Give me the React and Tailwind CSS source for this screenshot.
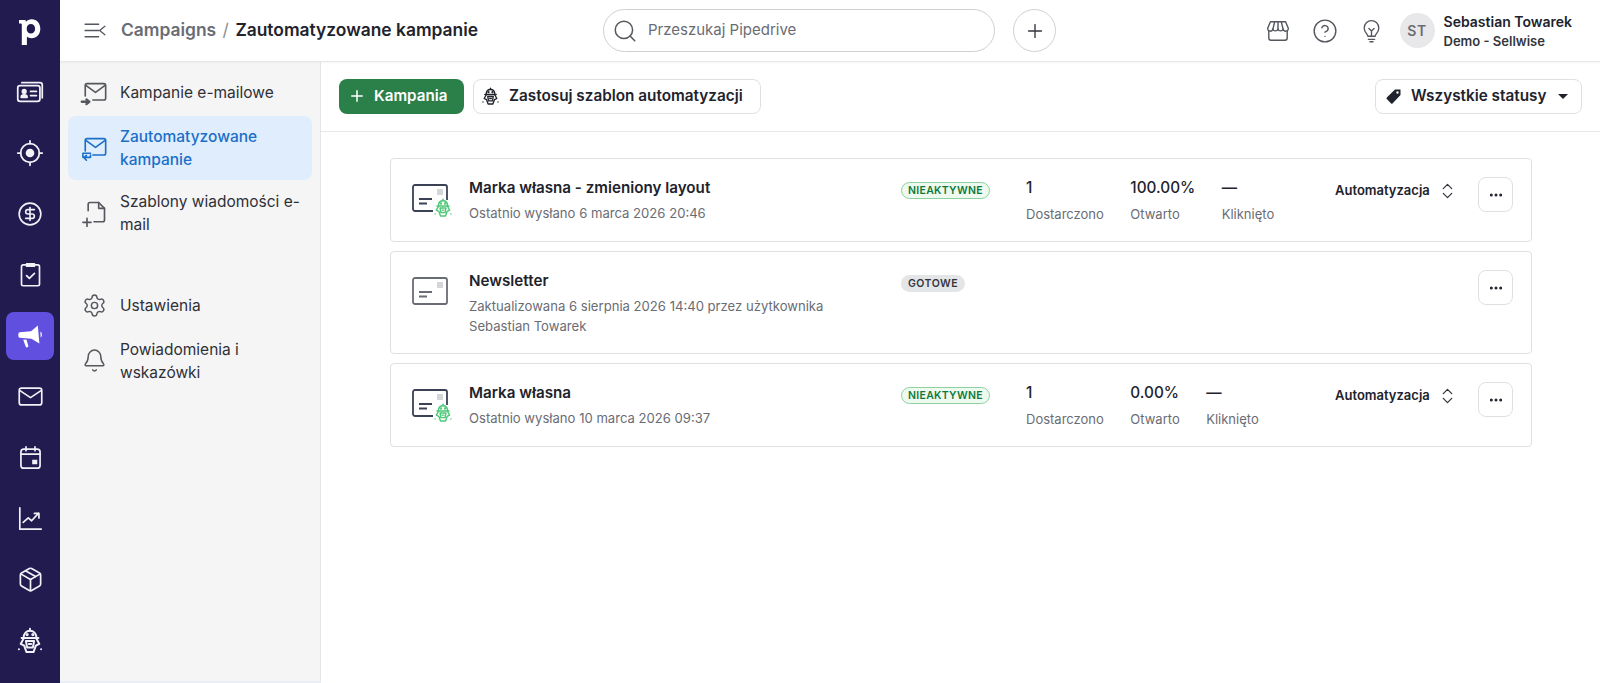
import { Search, Plus, HelpCircle, ChevronUp, ChevronDown, MoreHorizontal, Settings, Bell, Package, CircleDollarSign } from "lucide-react";

const Ico = ({ size = 24, sw = 1.6, children, className = "" }) => (
  <svg width={size} height={size} viewBox="0 0 24 24" fill="none" stroke="currentColor" strokeWidth={sw} strokeLinecap="round" strokeLinejoin="round" className={`shrink-0 ${className}`}>
    {children}
  </svg>
);

const Robot = ({ size = 24, className = "" }) => (
  <svg width={size} height={size} viewBox="0 0 24 24" fill="none" stroke="currentColor" strokeWidth="1.7" strokeLinecap="round" strokeLinejoin="round" className={`shrink-0 ${className}`}>
    <path d="M12 1.500v1.500" />
    <path d="M6.500 9.500C6.500 5.500 9 3.200 12 3.200s5.500 2.300 5.500 6.300" />
    <path d="M4.800 9.500h14.400" />
    <path d="M6.800 9.500l-2.800 5 3 1.500 2 5.500h6l2-5.500 3-1.500-2.800-5" />
    <path d="M8.500 12h7l-1 5.500h-5z" />
    <path d="M11 14.500h2" />
    <circle cx="9.500" cy="6.500" r=".6" fill="currentColor" />
    <circle cx="14.500" cy="6.500" r=".6" fill="currentColor" />
    <path d="M2.500 19v.1M21.500 19v.1" />
  </svg>
);

const Logo = () => (
  <svg width="24" height="28" viewBox="0 0 24 28" fill="#fff">
    <path fillRule="evenodd" d="M1 3h6.500l.4 1.800C9.300 3.300 11.300 2.300 13.800 2.300c5 0 8.500 4 8.500 9.400 0 5.500-3.600 9.500-8.800 9.500-1.900 0-3.500-.6-4.600-1.700V28H3.800V7.500c0-.6-.3-.9-.9-.9H1zM12.800 6.900c-2.400 0-4.100 1.800-4.100 4.800 0 3 1.700 4.900 4.100 4.900 2.500 0 4.300-1.900 4.300-4.900 0-3-1.800-4.800-4.300-4.800z" />
  </svg>
);

const railIcons = [
  <Ico key="a" size={28} sw={1.5}><rect x="1.500" y="6.500" width="19" height="13.500" rx="2" /><path d="M5 4h15.500A2 2 0 0 1 22.500 6v11" /><circle cx="7" cy="11.500" r="1.500" fill="currentColor" /><path d="M4.500 16.500c0-1.500 1-2 2.500-2s2.500.5 2.500 2z" fill="currentColor" /><path d="M12.500 11.500h5M12.500 15h5" /></Ico>,
  <Ico key="b" size={28} sw={1.5}><circle cx="12" cy="12" r="8" /><circle cx="12" cy="12" r="3.700" fill="currentColor" stroke="none" /><path d="M12 1.500v2.500M12 20v2.500M1.500 12H4M20 12h2.500" /></Ico>,
  <CircleDollarSign key="c" size={26} strokeWidth={1.5} />,
  <Ico key="d" size={27} sw={1.5}><rect x="4" y="3.500" width="16" height="18.500" rx="1.500" /><path d="M8.500 2.500h7v2h-7z" fill="currentColor" /><path d="M8.500 13l2.500 2.500 4.500-4.500" /></Ico>,
  <svg key="e" width="27" height="27" viewBox="0 0 24 24" fill="#fff"><path d="M2.500 9.200l10-1 6-5 1.400 16-7-4.300-10.400-.9a1.500 1.500 0 0 1-1.300-1.500v-2a1.500 1.500 0 0 1 1.300-1.300z" /><path d="M5.500 15.500l3 .3 1.500 5.200a1.200 1.200 0 0 1-2.300.7z" /><path d="M20.800 8.500c1.600.5 1.800 4.500.3 5.500z" /></svg>,
  <Ico key="f" size={27} sw={1.5}><rect x="2" y="4.500" width="20" height="15" rx="2" /><path d="M3 7l9 6 9-6" /></Ico>,
  <Ico key="g" size={27} sw={1.5}><rect x="3.500" y="4.500" width="17" height="17" rx="2.500" /><path d="M3.500 9h17M8 2.500v3.500M16 2.500v3.500" /><rect x="13.500" y="14" width="4.500" height="4" fill="currentColor" stroke="none" /></Ico>,
  <Ico key="h" size={27} sw={1.5}><path d="M2.500 2.500v19h19" /><path d="M5.500 15.500l4.500-4 3 2.500 6-6.500" /><path d="M15.500 7.500h4v4" /></Ico>,
  <Package key="i" size={27} strokeWidth={1.5} />,
  <Robot key="j" size={28} />,
];

const NavIconSend = ({ kind }) => (
  <Ico size={28} sw={1.4}>
    <path d="M4.500 14.500V5.500a1.500 1.500 0 0 1 1.500-1.500h14.500a1.500 1.500 0 0 1 1.500 1.500v11a1.500 1.500 0 0 1-1.500 1.500H11" />
    <path d="M5 5.500l8.300 6 8.200-6" />
    {kind === "send" ? (
      <path d="M1.500 19.500h5.500M5.500 17.500l2.500 2-2.500 2" strokeWidth="2" />
    ) : (
      <path d="M9 16.500H2.500v3.500h6.500v-2M5.500 22.500l-2-2.200 2-2" />
    )}
  </Ico>
);

const NavItem = ({ icon, active, children }) => (
  <div className={`flex items-center gap-[12px] rounded-lg px-3 leading-[23px] text-[15.500px] ${active ? "py-[9px] bg-[#e0edfd] text-[#1a6fc9] font-medium" : "py-[9.500px] text-[#2f3038]"}`}>
    <span className={`w-[28px] flex justify-center shrink-0 ${active ? "text-[#1a6fc9]" : "text-[#55575f]"}`}>{icon}</span>
    <span>{children}</span>
  </div>
);

const Stat = ({ value, label }) => (
  <div className="flex flex-col">
    <span className="text-[15.300px] leading-[22px] font-medium text-[#21232c]">{value}</span>
    <span className="text-[13px] leading-[20px] mt-[5px] text-[#6a6c74]">{label}</span>
  </div>
);

const MailIcon = ({ bot }) => {
  const c = bot ? "#3b4256" : "#6a6c74";
  return (
    <svg width="44" height="38" viewBox="0 0 44 38" fill="none" className="shrink-0">
      <path d={bot ? "M21 28H3a2 2 0 0 1-2-2V4a2 2 0 0 1 2-2h30a2 2 0 0 1 2 2v13" : "M3 2h30a2 2 0 0 1 2 2v22a2 2 0 0 1-2 2H3a2 2 0 0 1-2-2V4a2 2 0 0 1 2-2z"} stroke={c} strokeWidth="1.800" />
      <rect x="25" y="6" width="6" height="6" fill="#d5d6da" />
      <path d="M7 16h13M7 20.500h8" stroke={c} strokeWidth="1.800" />
      {bot && <foreignObject x="21" y="15" width="22" height="22"><Robot size={20} className="text-[#4cc877]" /></foreignObject>}
    </svg>
  );
};

const Card = ({ title, sub, badge, stats }) => (
  <div className="flex items-start rounded border border-[#dfe0e2] bg-white pl-[21px] pr-[18px] pt-[18px] pb-[17px]">
    <div className="w-[57px] shrink-0 pt-[6px]"><MailIcon bot={!!stats} /></div>
    <div className="w-[432px] shrink-0">
      <div className="text-[15.200px] leading-[22px] font-semibold text-[#21232c]">{title}</div>
      <div className="text-[13.100px] leading-[19.500px] mt-[5px] text-[#6a6c74] max-w-[390px]">{sub}</div>
    </div>
    <div className="w-[125px] shrink-0 pt-[5px] flex">
      <span className={`inline-flex items-center h-[17px] rounded-full text-[10.500px] font-semibold ${badge === "NIEAKTYWNE" ? "px-[6px] tracking-[0.3px] border border-[#8dd19f] bg-[#eef9f0] text-[#0d7a3a]" : "px-[7px] tracking-[0.5px] bg-[#e4e5e7] text-[#33353d]"}`}>{badge}</span>
    </div>
    <div className="flex flex-1 gap-[26.500px]">
      {stats && stats.map((s) => <Stat key={s.label} value={s.value} label={s.label} />)}
    </div>
    {stats && (
      <div className="flex items-center w-[143px] pt-[1px] text-[13px] font-semibold text-[#21232c]">
        <span className="w-[104px]">Automatyzacja</span>
        <span className="flex flex-col text-[#33353d]">
          <ChevronUp size={17} strokeWidth={1.800} className="-mb-[4px]" />
          <ChevronDown size={17} strokeWidth={1.800} className="-mt-[4px]" />
        </span>
      </div>
    )}
    <button className="w-[35px] h-[35px] shrink-0 flex items-center justify-center rounded-lg border border-[#dfe0e2] bg-white text-[#21232c]">
      <MoreHorizontal size={16} strokeWidth={2.500} />
    </button>
  </div>
);

export default function App() {
  return (
    <div className="flex h-[683px] w-[1600px] overflow-hidden bg-white font-['Inter',sans-serif]">
      <aside className="w-[60px] shrink-0 bg-[#211b50] flex flex-col items-center text-[#f2f1f7]">
        <div className="h-[61px] flex items-center justify-center"><Logo /></div>
        {railIcons.map((ic, i) => (
          <div key={i} className={`w-[48px] h-[48px] my-[6.500px] flex items-center justify-center rounded-lg ${i === 4 ? "bg-[#6150e0]" : ""}`}>{ic}</div>
        ))}
      </aside>

      <div className="flex-1 flex flex-col min-w-0">
        <header className="h-[62px] shrink-0 flex items-center border-b border-[#e6e7e9] shadow-[0_1px_2px_rgba(0,0,0,0.04)] relative z-10">
          <div className="w-[260px] shrink-0 flex items-center pl-[23px]">
            <Ico size={25} sw={1.300} className="text-[#55575f]"><path d="M2 6h13M2 12h13M2 18h13M21 8l-5 4 5 4" /></Ico>
            <span className="ml-[13px] text-[17.400px] font-semibold whitespace-nowrap text-[#6a6c74]">Campaigns</span>
            <span className="mx-[6.500px] text-[17.400px] text-[#8b8d94]">/</span>
            <span className="text-[17.400px] font-semibold whitespace-nowrap text-[#21232c]">Zautomatyzowane kampanie</span>
          </div>
          <div className="ml-[283px] w-[392px] h-[43px] flex items-center gap-[10px] rounded-full border border-[#cfd0d3] pl-[8px] text-[#6a6c74]">
            <Search size={26} strokeWidth={1.400} className="text-[#55575f]" />
            <span className="text-[15px]">Przeszukaj Pipedrive</span>
          </div>
          <div className="ml-[18px] w-[43px] h-[43px] flex items-center justify-center rounded-full border border-[#cfd0d3] text-[#33353d]">
            <Plus size={22} strokeWidth={1.500} />
          </div>
          <div className="ml-auto flex items-center pr-[28px]">
            <Ico size={26} sw={1.300} className="text-[#55575f]">
              <path d="M5 3.500h14l2.500 6a2.400 2.400 0 0 1-4.800.5 2.400 2.400 0 0 1-4.700 0 2.400 2.400 0 0 1-4.700 0 2.400 2.400 0 0 1-4.800-.5z" />
              <path d="M9 3.500l-1.700 6.500M15 3.500l1.700 6.500M12 3.500V10" />
              <path d="M3.500 12v6.500a2 2 0 0 0 2 2h13a2 2 0 0 0 2-2V12" />
            </Ico>
            <HelpCircle size={26} strokeWidth={1.300} className="ml-[21px] text-[#55575f]" />
            <Ico size={25} sw={1.300} className="ml-[21px] text-[#55575f]">
              <path d="M8.500 17.500c0-2-3.500-3.800-3.500-8a7 7 0 0 1 14 0c0 4.200-3.500 6-3.500 8z" />
              <path d="M9.500 10l2.500 2.500 2.500-2.500M12 12.500v5M9 20.500h6M10.500 22.800h3" />
            </Ico>
            <div className="ml-[16px] w-[35px] h-[35px] rounded-full bg-[#e8e8ea] text-[#6a6c74] flex items-center justify-center text-[14px] font-semibold tracking-[0.5px]">ST</div>
            <div className="ml-[9px] flex flex-col">
              <span className="text-[14px] leading-[20px] font-semibold text-[#21232c]">Sebastian Towarek</span>
              <span className="text-[13px] leading-[18px] font-semibold text-[#33353d]">Demo - Sellwise</span>
            </div>
          </div>
        </header>

        <div className="flex-1 flex min-h-0">
          <nav className="w-[261px] shrink-0 bg-[#f5f5f5] border-r border-[#e4e5e7] border-b-2 border-b-[#e9eef7] pl-[8px] pr-[8px] pt-[7px]">
            <NavItem icon={<NavIconSend kind="send" />}>Kampanie e-mailowe</NavItem>
            <NavItem active icon={<NavIconSend kind="loop" />}>Zautomatyzowane kampanie</NavItem>
            <NavItem icon={<Ico size={28} sw={1.400}><path d="M7 10V4.500A1.500 1.500 0 0 1 8.500 3H16l5 5v10a1.500 1.500 0 0 1-1.500 1.500H12" /><path d="M16 3v5h5M2.500 20h7M6 16.500v7" /></Ico>}>Szablony wiadomości e-mail</NavItem>
            <div className="mt-[38px]"><NavItem icon={<Settings size={25} strokeWidth={1.400} />}>Ustawienia</NavItem></div>
            <div className="mt-[1px]"><NavItem icon={<Bell size={25} strokeWidth={1.400} />}>Powiadomienia i wskazówki</NavItem></div>
          </nav>

          <main className="flex-1 min-w-0 bg-white">
            <div className="h-[70px] flex items-center border-b border-[#e6e7e9] pl-[18px] pr-[18px] pb-[1px]">
              <button className="h-[35px] w-[125px] flex items-center gap-[8px] pl-[9px] rounded-lg bg-[#2b8049] text-white text-[15.200px] font-semibold">
                <Plus size={18} strokeWidth={2} />Kampania
              </button>
              <button className="ml-[9px] h-[35px] w-[288px] flex items-center gap-[9px] pl-[7px] rounded-lg border border-[#dfe0e2] bg-white text-[#21232c] text-[15.300px] font-semibold">
                <Robot size={19} />Zastosuj szablon automatyzacji
              </button>
              <button className="ml-auto h-[35px] w-[207px] flex items-center gap-[8px] pl-[9px] rounded-lg border border-[#dfe0e2] bg-white text-[#21232c] text-[15.300px] font-semibold">
                <svg width="18" height="18" viewBox="0 0 18 18" className="shrink-0">
                  <path fill="#21232c" fillRule="evenodd" d="M10 2.500h5.500V8l-8 8.500a1 1 0 0 1-1.400 0L1.800 12a1 1 0 0 1 0-1.400zM12.500 4.300a1.200 1.200 0 1 0 0 2.400 1.200 1.200 0 0 0 0-2.400z" />
                </svg>
                Wszystkie statusy
                <span className="ml-[4px] w-0 h-0 border-x-[5px] border-x-transparent border-t-[5px] border-t-[#21232c]" />
              </button>
            </div>
            <div className="pl-[69px] pr-[68px] pt-[26px] flex flex-col gap-[9px]">
              <Card title="Marka własna - zmieniony layout" sub="Ostatnio wysłano 6 marca 2026 20:46" badge="NIEAKTYWNE" stats={[{ value: "1", label: "Dostarczono" }, { value: "100.00%", label: "Otwarto" }, { value: "—", label: "Kliknięto" }]} />
              <Card title="Newsletter" sub="Zaktualizowana 6 sierpnia 2026 14:40 przez użytkownika Sebastian Towarek" badge="GOTOWE" />
              <Card title="Marka własna" sub="Ostatnio wysłano 10 marca 2026 09:37" badge="NIEAKTYWNE" stats={[{ value: "1", label: "Dostarczono" }, { value: "0.00%", label: "Otwarto" }, { value: "—", label: "Kliknięto" }]} />
            </div>
          </main>
        </div>
      </div>
    </div>
  );
}
